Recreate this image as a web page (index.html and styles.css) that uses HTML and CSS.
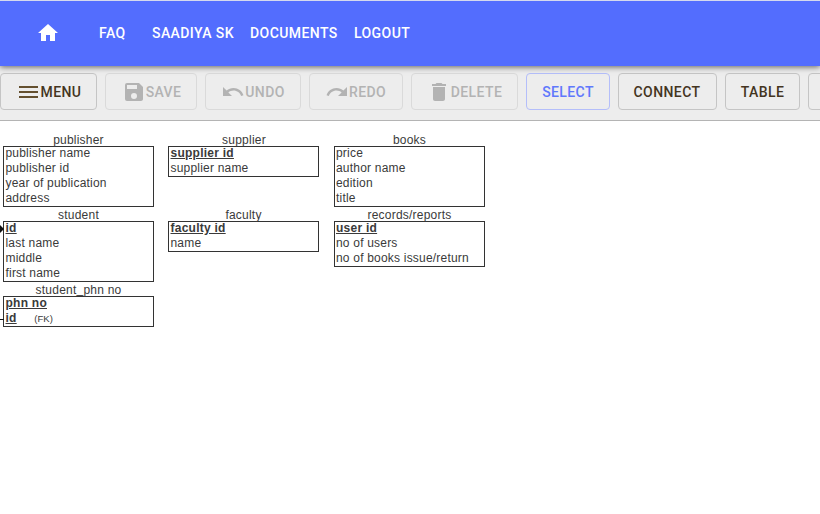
FILE: index.html
```html
<!DOCTYPE html>
<html lang="en">
<head>
<meta charset="utf-8">
<title>Diagram editor</title>
<link rel="stylesheet" href="styles.css">
</head>
<body>
<nav class="navbar">
  <a class="home"><svg width="24" height="24" viewBox="0 0 24 24"><path d="M10 20v-6h4v6h5v-8h3L12 3 2 12h3v8z"/></svg></a>
  <a class="link faq">FAQ</a>
  <a class="link user">SAADIYA SK</a>
  <a class="link docs">DOCUMENTS</a>
  <a class="link">LOGOUT</a>
</nav>
<div class="toolbar">
  <button class="btn menu"><svg class="burger" width="19" height="14" viewBox="0 0 19 14"><path d="M0 1h19v2H0zM0 6h19v2H0zM0 11h19v2H0z"/></svg><span>MENU</span></button>
  <button class="btn save off"><svg width="24" height="24" viewBox="0 0 24 24"><path d="M17 3H5a2 2 0 0 0-2 2v14a2 2 0 0 0 2 2h14c1.100 0 2-.9 2-2V7zm-5 16a3 3 0 1 1 0-6 3 3 0 0 1 0 6zm3-10H5V5h10z"/></svg><span>SAVE</span></button>
  <button class="btn undo off"><svg width="24" height="24" viewBox="0 0 24 24"><path d="M12.500 8c-2.650 0-5.050.99-6.900 2.600L2 7v9h9l-3.620-3.620c1.390-1.160 3.160-1.880 5.120-1.880 3.540 0 6.550 2.310 7.600 5.500l2.370-.78C21.080 11.030 17.150 8 12.500 8z"/></svg><span>UNDO</span></button>
  <button class="btn redo off"><svg width="24" height="24" viewBox="0 0 24 24"><path d="M18.400 10.600C16.550 8.990 14.150 8 11.500 8c-4.650 0-8.580 3.030-9.960 7.220L3.900 16c1.050-3.190 4.050-5.500 7.600-5.500 1.950 0 3.730.72 5.120 1.880L13 16h9V7z"/></svg><span>REDO</span></button>
  <button class="btn delete off"><svg width="24" height="24" viewBox="0 0 24 24"><path d="M6 19c0 1.100.9 2 2 2h8c1.100 0 2-.9 2-2V7H6zM19 4h-3.500l-1-1h-5l-1 1H5v2h14z"/></svg><span>DELETE</span></button>
  <button class="btn select active"><span>SELECT</span></button>
  <button class="btn connect"><span>CONNECT</span></button>
  <button class="btn table"><span>TABLE</span></button>
  <button class="btn more"></button>
</div>
<main class="canvas">
  <section class="entity publisher"><h2>publisher</h2><ul><li>publisher name</li><li>publisher id</li><li>year of publication</li><li>address</li></ul></section>
  <section class="entity supplier"><h2>supplier</h2><ul><li class="key"><u>supplier id</u></li><li>supplier name</li></ul></section>
  <section class="entity books"><h2>books</h2><ul><li>price</li><li>author name</li><li>edition</li><li>title</li></ul></section>
  <section class="entity student"><h2>student</h2><ul><li class="key"><u>id</u></li><li>last name</li><li>middle</li><li>first name</li></ul></section>
  <section class="entity faculty"><h2>faculty</h2><ul><li class="key"><u>faculty id</u></li><li>name</li></ul></section>
  <section class="entity records"><h2>records/reports</h2><ul><li class="key"><u>user id</u></li><li>no of users</li><li>no of books issue/return</li></ul></section>
  <section class="entity phone"><h2>student<span class="underscore">_</span>phn no</h2><ul><li class="key"><u>phn no</u></li><li class="key"><u>id</u><small>(FK)</small></li></ul></section>
  <svg class="connector" width="4" height="110" viewBox="0 0 4 110"><path d="M0 3l4 4-4 4z"/><path d="M0 97h4v1H0z"/></svg>
</main>
</body>
</html>
```
FILE: styles.css
```css
* { box-sizing: border-box; }
body {
  margin: 0;
  height: 514px;
  overflow: hidden;
  background: #fff;
  font-family: Roboto, sans-serif;
  display: flex;
  flex-direction: column;
}
.navbar {
  height: 66px;
  flex: none;
  display: flex;
  align-items: center;
  padding: 0 0 1px 36px;
  background: #536dfe;
  border-top: 1px solid #d5d9ee;
  color: #fff;
  box-shadow: 0 1px 6px rgba(0, 0, 0, .6);
  position: relative;
  z-index: 1;
}
.home { display: flex; width: 63px; }
svg { fill: currentColor; flex: none; display: block; }
.link { font-size: 14px; font-weight: 500; letter-spacing: .42px; white-space: nowrap; }
.faq { width: 53px; }
.user { width: 98px; }
.docs { width: 104px; }
.toolbar {
  height: 55px;
  flex: none;
  display: flex;
  gap: 8px;
  padding-top: 7px;
  background: #ededed;
  border-bottom: 1px solid #b4b4b4;
  overflow: hidden;
}
.btn {
  height: 37px;
  flex: none;
  display: flex;
  align-items: center;
  justify-content: center;
  padding: 0;
  border: 1px solid #c5c5c5;
  border-radius: 4px;
  background: transparent;
  color: #44351f;
  font: 500 14px Roboto, sans-serif;
  letter-spacing: .4px;
}
.off { color: #b3b3b3; border-color: #dadada; }
.active { color: #6078fc; border-color: #b4befa; }
.menu { width: 97px; padding-left: 3px; }
.burger { color: #64502f; margin-right: 3px; }
.save { width: 92px; padding-left: 1px; }
.undo { width: 96px; }
.redo { width: 94px; padding-right: 1px; }
.delete { width: 107px; }
.select { width: 84px; }
.connect { width: 99px; padding-right: 1px; }
.table { width: 75px; }
.more { width: 90px; }
.canvas {
  flex: 1;
  position: relative;
  font-family: "Liberation Sans", Arial, sans-serif;
  font-size: 12px;
  color: #3a3a3a;
}
.entity { position: absolute; width: 151px; }
.entity h2 {
  margin: 0;
  height: 13px;
  font-size: 12px;
  line-height: 15px;
  font-weight: 400;
  letter-spacing: .22px;
  text-align: center;
}
.underscore { position: relative; top: -1px; }
.entity ul { margin: 0; padding: 0 0 0 1.5px; list-style: none; border: 1px solid #333; }
.entity li { height: 15px; line-height: 12px; letter-spacing: .2px; white-space: nowrap; }
.entity .key { letter-spacing: .25px; }
.entity li:last-child { height: 14px; }
.key { font-weight: 700; }
.key small { margin-left: 17.5px; font-size: 9.5px; font-weight: 400; letter-spacing: .1px; }
.publisher { left: 3px; top: 12px; }
.supplier { left: 168px; top: 12px; }
.supplier h2, .books h2, .records h2 { padding-left: 1px; }
.books { left: 333.5px; top: 12px; }
.student { left: 3px; top: 87px; }
.faculty { left: 168px; top: 87px; }
.records { left: 333.5px; top: 87px; }
.phone { left: 3px; top: 162px; }
.connector { position: absolute; left: 0; top: 101px; color: #111; }
```
